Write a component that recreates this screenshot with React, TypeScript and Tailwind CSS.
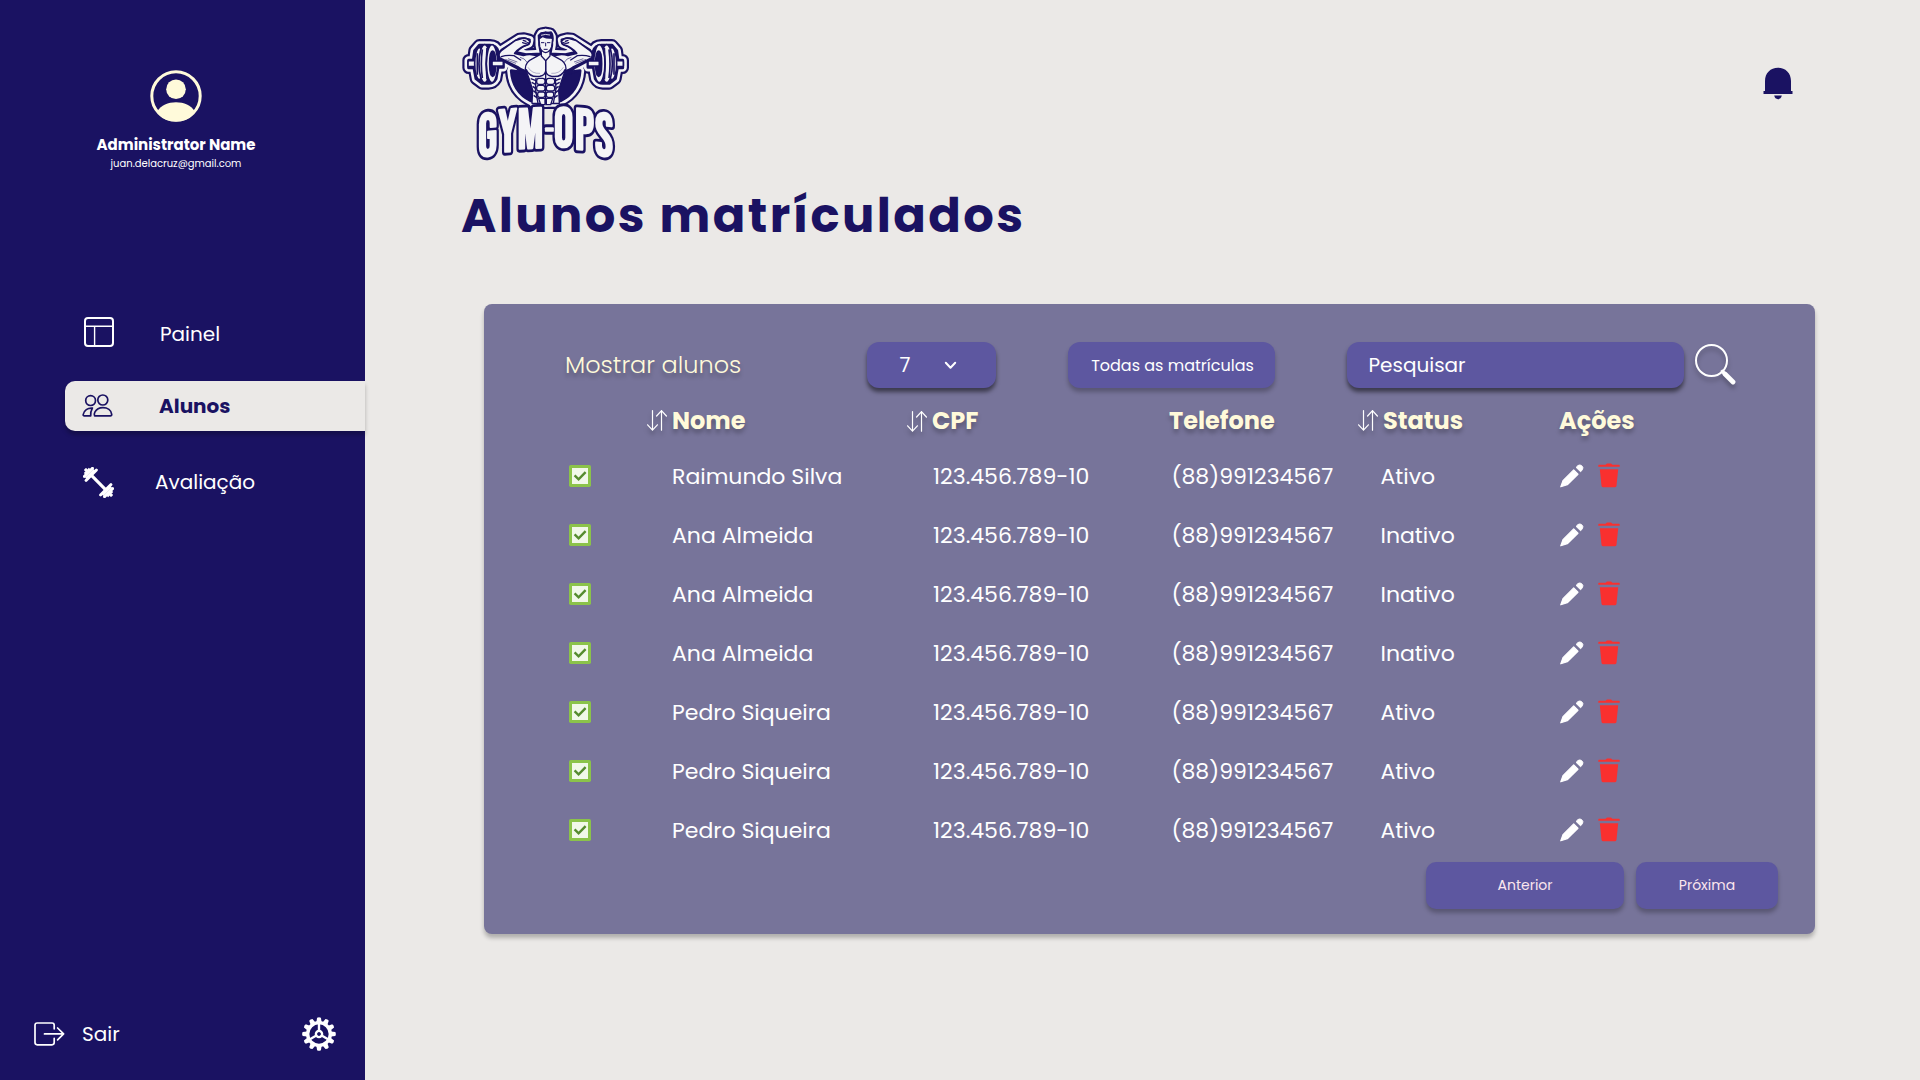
import React from "react";

const NAVY = "#1a1262";
const LIGHT = "#f4f4f6";

type Student = { name: string; cpf: string; phone: string; status: string };

const cpf = "123.456.789-10";
const phone = "(88)991234567";

const students: Student[] = [
  { name: "Raimundo Silva", cpf, phone, status: "Ativo" },
  { name: "Ana Almeida", cpf, phone, status: "Inativo" },
  { name: "Ana Almeida", cpf, phone, status: "Inativo" },
  { name: "Ana Almeida", cpf, phone, status: "Inativo" },
  { name: "Pedro Siqueira", cpf, phone, status: "Ativo" },
  { name: "Pedro Siqueira", cpf, phone, status: "Ativo" },
  { name: "Pedro Siqueira", cpf, phone, status: "Ativo" },
];

/* ---------- icons ---------- */

function AvatarIcon() {
  return (
    <svg width="52" height="52" viewBox="0 0 52 52" className="block">
      <defs>
        <clipPath id="avatar-clip">
          <circle cx="26" cy="26" r="25.6" />
        </clipPath>
      </defs>
      <circle cx="26" cy="26" r="24.2" fill="none" stroke="#fffada" strokeWidth="3" />
      <circle cx="26" cy="19.3" r="9.8" fill="#fffada" />
      <path d="M7.5 41 C11 35 18 32.2 26 32.2 C34 32.2 41 35 44.5 41 L40 52 H12 Z" fill="#fffada" clipPath="url(#avatar-clip)" />
    </svg>
  );
}

function LayoutIcon() {
  return (
    <svg width="30" height="30" viewBox="0 0 30 30" fill="none" stroke="#fff" className="block">
      <rect x="1" y="1" width="28" height="28" rx="3" strokeWidth="2" />
      <path d="M1 9.3H29M10.6 9.3V29" strokeWidth="1.4" />
    </svg>
  );
}

function PeopleIcon() {
  return (
    <svg width="31" height="24" viewBox="0 0 31 24" fill="none" stroke={NAVY} strokeWidth="1.7" strokeLinejoin="round" strokeLinecap="round" className="block">
      <circle cx="8.6" cy="6.6" r="4.9" />
      <circle cx="20.8" cy="6" r="5" />
      <path d="M12.6 21.8c-.6-1-.5-2.200 .4-3.900 1.600-3 4.500-4.300 7.900-4.300 4.700 0 8.300 2.600 8.800 6.700.1.900-.4 1.500-1.300 1.500Z" />
      <path d="M10.400 14.100c-4.600-.5-8.600 2.300-9.200 6.400-.1.800.3 1.300 1.100 1.300h6.400c-.2-3.200.4-5.500 1.700-7.700Z" />
    </svg>
  );
}

function DumbbellIcon() {
  return (
    <svg width="31" height="31" viewBox="-15.500 -15.500 31 31" fill="#fff" className="block">
      <g transform="rotate(45)">
        <rect x="-11" y="-1.600" width="22" height="3.200" />
        {[0, 180].map((a) => (
          <g key={a} transform={`rotate(${a})`}>
            <rect x="8.800" y="-8.800" width="3" height="17.600" rx="1.400" />
            <rect x="10.500" y="-6" width="2.600" height="12" />
            <rect x="12.800" y="-7.200" width="3" height="14.400" rx="1.400" />
            <rect x="15" y="-3.600" width="2.200" height="7.200" />
            <rect x="16.500" y="-1.600" width="2.800" height="3.200" rx="1" />
          </g>
        ))}
      </g>
    </svg>
  );
}

function LogoutIcon() {
  return (
    <svg width="31" height="24" viewBox="0 0 31 24" fill="none" stroke="#fff" strokeWidth="1.700" strokeLinecap="round" strokeLinejoin="round" className="block">
      <path d="M20.200 6.800V3.200c0-1.400-.8-2.200-2.200-2.200H3.200C1.800 1 1 1.800 1 3.200v17.400c0 1.400.8 2.200 2.200 2.200H18c1.400 0 2.200-.8 2.200-2.200v-4.200" />
      <path d="M10.500 11.900H29.500M23.600 6l6 5.900-6 5.900" />
    </svg>
  );
}

function GearIcon() {
  const teeth = Array.from({ length: 12 }, (_, i) => i * 30);
  return (
    <svg width="34" height="34" viewBox="-17 -17 34 34" className="block">
      <circle r="11.300" fill="none" stroke="#fff" strokeWidth="3.300" />
      {teeth.map((a) => (
        <path key={a} d="M-2.600 -12 L-1.900 -16.300 Q0 -17.400 1.900 -16.300 L2.600 -12 Z" fill="#fff" transform={`rotate(${a})`} />
      ))}
      {[0, 120, 240].map((a) => (
        <path key={a} d="M-1.200 -10.500V-3.500H1.200V-10.500Z" fill="#fff" transform={`rotate(${a})`} />
      ))}
      <circle r="3.100" fill="none" stroke="#fff" strokeWidth="2.400" />
    </svg>
  );
}

function BellIcon() {
  return (
    <svg width="30" height="33" viewBox="0 0 30 33" fill={NAVY} className="block">
      <path d="M2 24V14C2 6 7.500 .7 15 .7S28 6 28 14V24H29.500V27H.5V24Z" />
      <path d="M11.200 28.600H18.800C18.400 30.900 17 32.200 15 32.200S11.600 30.900 11.200 28.600Z" />
    </svg>
  );
}

function SortIcon() {
  return (
    <svg width="20" height="21" viewBox="0 0 20 21" fill="none" stroke="#fff" strokeWidth="1.200" strokeLinecap="round" strokeLinejoin="round" className="block overflow-visible drop-shadow-[0_4px_2px_rgba(0,0,0,0.25)]">
      <path d="M5.500 .6V20.200M.6 14.800l4.900 5.400 4.900-5.400" />
      <path d="M14.500 20.200V.6M9.600 6l4.900-5.400L19.400 6" />
    </svg>
  );
}

function SearchIcon() {
  return (
    <svg width="42" height="42" viewBox="0 0 42 42" fill="none" stroke="#fff" strokeLinecap="round" className="block overflow-visible drop-shadow-[0_4px_2px_rgba(0,0,0,0.25)]">
      <circle cx="16.500" cy="16.500" r="15.500" strokeWidth="2" />
      <path d="M27.500 27.500L31 31" strokeWidth="3.600" />
      <path d="M30 30L38 38" strokeWidth="4.800" />
    </svg>
  );
}

function CheckIcon() {
  return (
    <svg width="22" height="22" viewBox="0 0 22 22" className="block">
      <rect width="22" height="22" rx="1.800" fill="#8bc34a" />
      <rect x="3" y="3" width="16" height="16" fill="#f1f8e9" />
      <path d="M5.600 10.400l4 4 7-7.200" fill="none" stroke="#558b2f" strokeWidth="2.400" />
    </svg>
  );
}

function PencilIcon() {
  return (
    <svg width="24" height="24" viewBox="0 0 24 24" fill="#fff" stroke="#fff" strokeLinejoin="round" className="block">
      <path d="M.8 22.800 3 16.600 13.700 5.900 18 10.200 7.300 20.700Z" strokeWidth="1.200" />
      <path d="M16.100 3.400 18 1.500Q20 .2 21.900 1.900T22.300 5.800L20.600 7.800Z" strokeWidth="1" />
    </svg>
  );
}

function TrashIcon() {
  return (
    <svg width="22" height="25" viewBox="0 0 22 25" fill="#f9302f" className="block">
      <path d="M1 1.700H7.500L9 .5H13L14.500 1.700H21Q21.700 1.700 21.700 2.400V3.700H.3V2.400Q.3 1.700 1 1.700Z" />
      <path d="M1.800 6.200H20.200L18.500 22.700Q18.300 24.300 16.700 24.300H5.300Q3.700 24.300 3.500 22.700Z" />
    </svg>
  );
}

/* ---------- logo ---------- */

function Silhouette() {
  const half = (
    <>
      <path d="M317 69 L304 71 L299 80 L299 105 L304 132 L258 134 L224 127 L246 108 L266 100 L268 90 L252 86 L238 87 L186 120 L176 133 L182 147 L232 174 L262 200 L275 245 L280 278 H317 Z" />
      <path d="M214 182 Q218 245 272 272 L300 272 L270 190 Z" />
      <path d="M86 151 H100 L104 122 L118 106 H150 Q168 106 174 124 L190 150 V172 H174 L168 206 Q160 220 146 220 H126 L108 206 L102 173 H86 Z" />
    </>
  );
  return (
    <>
      {half}
      <g transform="translate(634 0) scale(-1 1)">{half}</g>
    </>
  );
}

function HalfAthlete() {
  return (
    <>
      {/* weight plates */}
      <g fill={LIGHT} stroke={NAVY} strokeWidth="5">
        <rect x="84" y="152" width="22" height="18" rx="3" />
        <ellipse cx="118" cy="161" rx="14" ry="48" />
        <ellipse cx="134" cy="161" rx="17" ry="57" />
        <ellipse cx="156" cy="161" rx="17" ry="57" />
        <ellipse cx="158" cy="161" rx="9" ry="38" fill={NAVY} />
        <rect x="156" y="153" width="34" height="15" rx="3" />
      </g>
      <path d="M112 130V194M127 118Q121 161 127 204M141 114Q136 161 141 208" stroke={NAVY} strokeWidth="5" fill="none" />
      {/* dark disc behind the torso */}
      <path d="M215 184 Q220 245 270 274 L278 250 Q268 215 252 196 Z" fill={NAVY} />
      {/* arm */}
      <path d="M300 141 Q275 128 250 136 L224 130 Q238 112 264 104 L270 95 Q262 82 246 85 L226 91 L184 122 Q172 132 180 144 L236 172 Q248 182 264 182 Z" fill={LIGHT} stroke={NAVY} strokeWidth="5" strokeLinejoin="round" />
      <path d="M184 140 Q200 134 222 137 L242 150 M248 98 Q256 102 264 98 M250 91L258 94" fill="none" stroke={NAVY} strokeWidth="4" strokeLinecap="round" />
      <path d="M196 148L228 160 M204 146L232 156 M240 142Q254 144 262 158" fill="none" stroke={NAVY} strokeWidth="2.500" opacity="0.700" />
      {/* torso */}
      <path d="M317 142 L304 132 L278 146 Q256 156 256 176 L268 208 L278 240 L276 280 H317 Z" fill={LIGHT} stroke={NAVY} strokeWidth="4" strokeLinejoin="round" />
      <path d="M258 178 Q270 204 300 199 Q314 196 317 184" fill="none" stroke={NAVY} strokeWidth="4.500" />
      <path d="M264 172 Q276 192 300 190" fill="none" stroke={NAVY} strokeWidth="2" opacity="0.450" />
      <path d="M272 206L288 212M275 217L288 224M278 229L289 237M280 242L290 250M281 256L292 264" stroke={NAVY} strokeWidth="4.500" />
      <path d="M288 204L286 236 L294 280" fill="none" stroke={NAVY} strokeWidth="4" />
      <g fill={LIGHT} stroke={NAVY} strokeWidth="4">
        <rect x="290" y="205" width="25" height="18" rx="7" />
        <rect x="290" y="226" width="25" height="17" rx="7" />
        <rect x="293" y="246" width="22" height="16" rx="6" />
        <path d="M296 265H315V284H302Z" />
      </g>
    </>
  );
}

const logoLetters = [
  { ch: "G", x: 143, y: 437, w: 0.8, skew: -5, s: 181 },
  { ch: "Y", x: 203, y: 424, w: 0.77, skew: -5, s: 180 },
  { ch: "M", x: 271, y: 414, w: 0.83, skew: -3, s: 170 },
  { ch: "O", x: 371, y: 410, w: 0.85, skew: 2, s: 166 },
  { ch: "P", x: 433, y: 419, w: 0.84, skew: 4, s: 174 },
  { ch: "S", x: 492, y: 437, w: 0.8, skew: 5, s: 181 },
];

function LogoLetters({ stroke, width, fill }: { stroke: string; width: number; fill: string }) {
  return (
    <g fill={fill} stroke={stroke} strokeWidth={width} strokeLinejoin="round" fontFamily="'Bebas Neue', Roboto, sans-serif" textAnchor="middle">
      {logoLetters.map((l) => (
        <text key={l.ch} fontSize={l.s} transform={`translate(${l.x} ${l.y}) skewY(${l.skew}) scale(${l.w} 1)`}>
          {l.ch}
        </text>
      ))}
      <rect x="318" y="355" width="20" height="7" />
    </g>
  );
}

function Logo() {
  return (
    <svg width="210" height="160" viewBox="0 0 630 480" className="block overflow-visible">
      <g fill={NAVY} stroke={NAVY} strokeWidth="38" strokeLinejoin="round">
        <Silhouette />
      </g>
      <g fill={LIGHT} stroke={LIGHT} strokeWidth="25" strokeLinejoin="round">
        <Silhouette />
      </g>
      <g fill={NAVY} stroke={NAVY} strokeWidth="9" strokeLinejoin="round">
        <Silhouette />
      </g>
      <HalfAthlete />
      <g transform="translate(634 0) scale(-1 1)">
        <HalfAthlete />
      </g>
      {/* neck and head */}
      <path d="M304 120 V138 L317 152 L330 138 V120 Z" fill={LIGHT} stroke={NAVY} strokeWidth="4" />
      <path d="M317 154V186" stroke={NAVY} strokeWidth="4" />
      <path d="M297 86 L299 110 Q304 126 317 128 Q330 126 335 110 L338 86 Q330 76 317 78 Q304 76 297 86 Z" fill={LIGHT} stroke={NAVY} strokeWidth="4" />
      <path d="M294 94 L293 76 Q300 65 318 66 L334 64 Q344 72 340 96 L335 86 Q322 88 308 82 L299 88 Z" fill={NAVY} />
      <path d="M303 98H313M321 98H331M317 98V109M311 118H323" stroke={NAVY} strokeWidth="3" />
      <path d="M303 76Q316 71 330 75" fill="none" stroke={LIGHT} strokeWidth="2.500" />

      <LogoLetters stroke={NAVY} width={24} fill={NAVY} />
      <LogoLetters stroke={LIGHT} width={7} fill={LIGHT} />
    </svg>
  );
}

/* ---------- page ---------- */

function Sidebar() {
  return (
    <aside className="flex h-full w-[365px] shrink-0 flex-col bg-[#1a1262] text-white">
      <div className="flex w-[352px] flex-col items-center pt-[69.500px]">
        <AvatarIcon />
        <div className="mt-[12.500px] text-[15px] leading-[22px] font-bold">Administrator Name</div>
        <div className="text-[10px] leading-[15px] font-normal">juan.delacruz@gmail.com</div>
      </div>

      <nav className="mt-[138px] flex flex-col text-[20px] leading-[30px]">
        <a className="flex h-[50px] items-center pl-[84px]">
          <span className="w-[76px] pb-[4px]">
            <LayoutIcon />
          </span>
          <span>Painel</span>
        </a>
        <a className="relative mt-[22px] ml-[65px] flex h-[50px] items-center rounded-l-[10px] bg-[#ebe9e7] pl-[17px] font-bold text-[#1a1262] shadow-[0_4px_4px_rgba(0,0,0,0.25)]">
          <span className="w-[77px]">
            <PeopleIcon />
          </span>
          <span>Alunos</span>
        </a>
        <a className="mt-[26px] flex h-[50px] items-center pl-[82.500px]">
          <span className="w-[72.500px]">
            <DumbbellIcon />
          </span>
          <span>Avaliação</span>
        </a>
      </nav>

      <div className="mt-auto mb-[29px] flex h-[34px] items-center pr-[29px] pl-[33.500px] text-[20px] leading-[30px]">
        <LogoutIcon />
        <span className="ml-[17.500px]">Sair</span>
        <span className="ml-auto">
          <GearIcon />
        </span>
      </div>
    </aside>
  );
}

const columns = "grid grid-cols-[103px_261px_238px_209px_180px_1fr] items-center";
const textGlow = "[text-shadow:0_4px_4px_rgba(0,0,0,0.25)]";

function SortHeading({ children, nudge = "pb-[1px]" }: { children: React.ReactNode; nudge?: string }) {
  return (
    <div className="-ml-[25px] flex items-center">
      <span className={`w-[25px] ${nudge}`}>
        <SortIcon />
      </span>
      {children}
    </div>
  );
}

function Panel() {
  return (
    <section className="ml-[119px] h-[630px] w-[1331px] rounded-[8px] bg-[#77749a] pt-[38px] text-white shadow-[0_4px_4px_rgba(0,0,0,0.25)]">
      <div className="flex h-[46px] items-center pl-[81px]">
        <div className={`w-[302px] text-[24px] font-light text-[#fffada] ${textGlow}`}>Mostrar alunos</div>
        <button className="flex h-[46px] w-[129px] items-center rounded-[12px] bg-[#5d57a0] pl-[32.500px] text-[20px] shadow-[0_4px_4px_rgba(0,0,0,0.5)]">
          <span className="w-[44.500px] text-left">7</span>
          <svg width="13" height="9" viewBox="0 0 13 9" fill="none" stroke="#fff" strokeWidth="2" strokeLinecap="round" strokeLinejoin="round">
            <path d="M1.800 1.800 6.500 6.700 11.200 1.800" />
          </svg>
        </button>
        <button className="ml-[72px] h-[46px] w-[207px] rounded-[12px] bg-[#5d57a0] pt-px pl-[2px] text-[16px] shadow-[0_4px_4px_rgba(0,0,0,0.25)]">
          Todas as matrículas
        </button>
        <div className="ml-[72px] flex h-[46px] w-[337px] items-center rounded-[12px] bg-[#5d57a0] pl-[21.500px] text-[20px] shadow-[0_4px_4px_rgba(0,0,0,0.5)]">
          Pesquisar
        </div>
        <span className="ml-[11px]">
          <SearchIcon />
        </span>
      </div>

      <div className={`${columns} mt-[15px] h-[36px] pl-[85px] text-[24px] leading-[36px] font-bold text-[#fffada] ${textGlow}`}>
        <span />
        <SortHeading>Nome</SortHeading>
        <div className="-ml-px">
          <SortHeading nudge="pt-px">CPF</SortHeading>
        </div>
        <div className="-ml-[2px]">Telefone</div>
        <div className="ml-[3px]">
          <SortHeading>Status</SortHeading>
        </div>
        <div className="-ml-[1px]">Ações</div>
      </div>

      <div className="mt-[7px]">
        {students.map((s, i) => (
          <div key={i} className={`${columns} h-[59px] pl-[85px] text-[22px] leading-[33px]`}>
            <CheckIcon />
            <span className="pt-[2px]">{s.name}</span>
            <span className="pt-[2px]">{s.cpf}</span>
            <span className="pt-[2px] pl-[0.500px]">{s.phone}</span>
            <span className="pt-[2px] pl-[0.500px]">{s.status}</span>
            <span className="flex items-center gap-[14px]">
              <PencilIcon />
              <TrashIcon />
            </span>
          </div>
        ))}
      </div>

      <div className="mt-[3px] flex gap-[12px] pl-[942px] text-[14px] text-[#fbe6ee]">
        <button className="h-[47px] w-[198px] rounded-[10px] bg-[#5d57a0] shadow-[0_4px_4px_rgba(0,0,0,0.25)]">Anterior</button>
        <button className="h-[47px] w-[142px] rounded-[10px] bg-[#5d57a0] shadow-[0_4px_4px_rgba(0,0,0,0.25)]">Próxima</button>
      </div>
    </section>
  );
}

export default function App() {
  return (
    <div className="flex h-[1080px] w-[1920px] overflow-hidden bg-[#ebe9e7] font-['Poppins','Inter',sans-serif]">
      <Sidebar />
      <main className="flex flex-1 flex-col">
        <header className="flex justify-between pt-[10px] pr-[127.500px] pl-[75px]">
          <Logo />
          <span className="pt-[57px]">
            <BellIcon />
          </span>
        </header>
        <h1 className="mt-[10px] mb-[52px] pl-[96px] text-[48px] leading-[72px] font-bold tracking-[0.05em] text-[#1a1262]">
          Alunos matrículados
        </h1>
        <Panel />
      </main>
    </div>
  );
}
